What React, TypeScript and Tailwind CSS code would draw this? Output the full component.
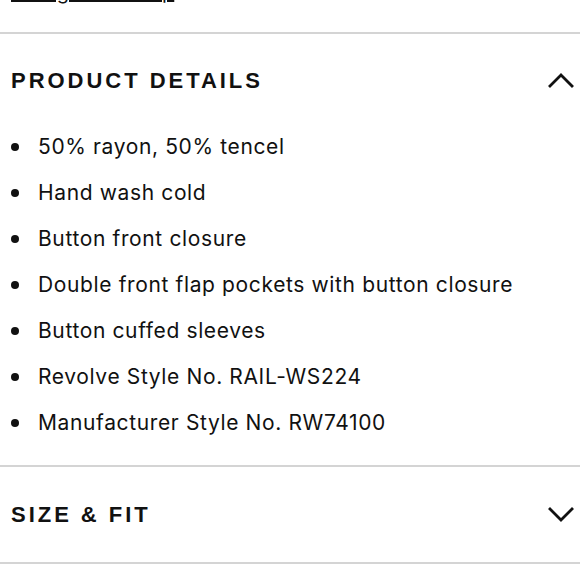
const details = [
  '50% rayon, 50% tencel',
  'Hand wash cold',
  'Button front closure',
  'Double front flap pockets with button closure',
  'Button cuffed sleeves',
  'Revolve Style No. RAIL-WS224',
  'Manufacturer Style No. RW74100',
]

function Chevron({ up }: { up?: boolean }) {
  return (
    <svg width="26" height="16" viewBox="0 0 26 16" fill="none" stroke="#111" strokeWidth="2.8" strokeLinecap="square">
      {up ? <polyline points="2,14 13,3 24,14" /> : <polyline points="2,2 13,13 24,2" />}
    </svg>
  )
}

export default function App() {
  return (
    <div className="w-[580px] h-[580px] overflow-hidden bg-white text-[#111]">
      {/* clipped link from the section above */}
      <div className="h-[4px] overflow-hidden pl-[11px]">
        <div className="-mt-[20px] text-[20px] leading-[24px] font-['Inter',sans-serif] underline decoration-2 underline-offset-[1px] w-[184px] whitespace-nowrap">
          Size guide &amp; help
        </div>
      </div>

      <div className="mt-[28px] border-t-2 border-[#d4d4d4]">
        <div className="flex items-center justify-between h-[90px] pl-[11px] pr-[6px] pt-[2px]">
          <h2 className="font-['Liberation_Sans',sans-serif] font-bold text-[22px] tracking-[0.135em]">
            PRODUCT DETAILS
          </h2>
          <Chevron up />
        </div>
        <ul className="pb-[19px] font-['Inter',sans-serif] text-[21px] tracking-[0.03em]">
          {details.map((d) => (
            <li key={d} className="flex items-center h-[46px] pl-[11px]">
              <span className="w-[8px] h-[8px] rounded-full bg-[#111] mr-[19px]" />
              {d}
            </li>
          ))}
        </ul>
      </div>

      <div className="border-t-2 border-[#d4d4d4]">
        <div className="flex items-center justify-between h-[95px] pl-[11px] pr-[6px]">
          <h2 className="font-['Liberation_Sans',sans-serif] font-bold text-[22px] tracking-[0.135em]">
            SIZE &amp; FIT
          </h2>
          <Chevron />
        </div>
      </div>
      <div className="border-t-2 border-[#d4d4d4]" />
    </div>
  )
}
